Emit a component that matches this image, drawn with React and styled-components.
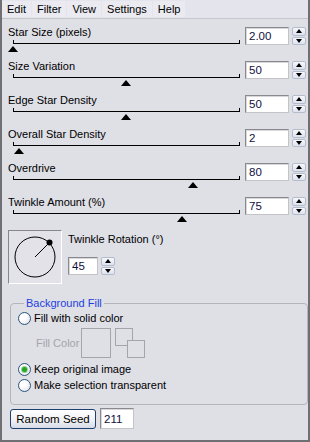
import React from "react";
import styled, { createGlobalStyle } from "styled-components";

const GlobalStyle = createGlobalStyle`
  html, body {
    margin: 0;
    padding: 0;
    background: #dfdfe6;
  }
  * {
    box-sizing: border-box;
  }
`;

const sliders = [
  { label: "Star Size (pixels)", value: "2.00", pct: 0 },
  { label: "Size Variation", value: "50", pct: 0.5 },
  { label: "Edge Star Density", value: "50", pct: 0.5 },
  { label: "Overall Star Density", value: "2", pct: 0.027 },
  { label: "Overdrive", value: "80", pct: 0.8 },
  { label: "Twinkle Amount (%)", value: "75", pct: 0.75 },
];

const Window = styled.div`
  width: 310px;
  height: 442px;
  background: #dfdfe6;
  border-left: 2px solid #6f6f74;
  border-right: 2px solid #6f6f74;
  border-bottom: 2px solid #6f6f74;
  font-family: "Liberation Sans", Arial, sans-serif;
  font-size: 11px;
  color: #000;
  display: flex;
  flex-direction: column;
`;

const MenuBar = styled.div`
  height: 19px;
  display: flex;
  align-items: center;
  gap: 1px;
  background: #e4e4ec;
  border-bottom: 1px solid #c6c6ce;
`;

const MenuItem = styled.span`
  padding: 0 5px;
  line-height: 16px;
  background: #eaeaf0;
`;

const Body = styled.div`
  padding: 6px 0 0 6px;
  display: flex;
  flex-direction: column;
`;

const Row = styled.div`
  display: flex;
  height: 34px;
`;

const LeftCol = styled.div`
  width: 232px;
  display: flex;
  flex-direction: column;
`;

const Label = styled.div`
  line-height: 14px;
  white-space: nowrap;
`;

const SliderArea = styled.div`
  position: relative;
  margin-left: 5px;
  margin-top: 1px;
  width: 227px;
  height: 12px;
`;

const Track = styled.div`
  height: 4px;
  border-left: 1px solid #000;
  border-right: 1px solid #000;
  border-bottom: 1px solid #000;
`;

const Thumb = styled.div`
  position: absolute;
  top: 6px;
  width: 0;
  height: 0;
  border-left: 5.5px solid transparent;
  border-right: 5.5px solid transparent;
  border-bottom: 6px solid #000;
`;

const NumBox = styled.div`
  width: ${(p) => p.$w}px;
  height: ${(p) => p.$h || 18}px;
  margin-top: ${(p) => p.$top || 0}px;
  margin-left: ${(p) => p.$left || 0}px;
  background: #fff;
  border: 1px solid;
  border-color: #8a8a8e #c4c4c8 #c4c4c8 #8a8a8e;
  box-shadow: inset 1px 1px 0 #d8d8dc;
  padding: ${(p) => (p.$h ? 3 : 1)}px 0 0 3px;
  font-size: 11.5px;
  line-height: 15px;
  color: #101040;
`;

const Spin = styled.div`
  width: 14px;
  height: 18px;
  margin-top: ${(p) => p.$top || 0}px;
  margin-left: 3px;
  display: flex;
  flex-direction: column;
  gap: 1px;
`;

const SpinBtn = styled.div`
  flex: 1;
  border: 1px solid #b4bccc;
  border-radius: 2px;
  background: linear-gradient(#f6f8fc, #dde2ee);
  display: flex;
  align-items: center;
  justify-content: center;
`;

const Arrow = styled.div`
  width: 0;
  height: 0;
  border-left: 3.5px solid transparent;
  border-right: 3.5px solid transparent;
  ${(p) =>
    p.$up ? "border-bottom: 4px solid #000;" : "border-top: 4px solid #000;"}
`;

const RotationRow = styled.div`
  display: flex;
  margin-top: 1px;
  gap: 6px;
`;

const Dial = styled.div`
  width: 54px;
  height: 54px;
  border: 1px solid;
  border-color: #86868c #ffffff #ffffff #86868c;
  background: #e2e2e8;
`;

const RotationSide = styled.div`
  display: flex;
  flex-direction: column;
  padding-top: 2px;
`;

const InputLine = styled.div`
  display: flex;
  margin-top: ${(p) => p.$top || 0}px;
`;

const Group = styled.fieldset`
  margin: 13px 0 0 2px;
  width: 298px;
  border: 1px solid #b4b4bc;
  border-radius: 4px;
  padding: 0 0 11px 7px;
  min-width: 0;
`;

const Legend = styled.legend`
  color: #1e3ee0;
  padding: 0 2px;
  margin-left: 6px;
  line-height: 13px;
`;

const RadioRow = styled.div`
  display: flex;
  align-items: center;
  gap: 3px;
  height: 16px;
`;

const Radio = styled.span`
  width: 13px;
  height: 13px;
  border-radius: 50%;
  border: 1px solid #2a5480;
  background: radial-gradient(circle at 35% 35%, #ffffff 30%, #dcdce4 100%);
  display: flex;
  align-items: center;
  justify-content: center;
  &::after {
    content: "";
    width: 5px;
    height: 5px;
    border-radius: 50%;
    background: ${(p) => (p.$checked ? "#2aa52a" : "transparent")};
    box-shadow: ${(p) => (p.$checked ? "0 0 0 1px #8fd48f" : "none")};
  }
`;

const ColorRow = styled.div`
  display: flex;
  align-items: center;
  margin: 2px 0 3px 18px;
`;

const MutedLabel = styled.span`
  color: #a4a4aa;
  width: 45px;
`;

const Swatch = styled.div`
  width: 30px;
  height: 30px;
  border: 1px solid #a4a4aa;
`;

const SwapPair = styled.div`
  position: relative;
  width: 30px;
  height: 30px;
  margin-left: 4px;
`;

const MiniSquare = styled.div`
  position: absolute;
  width: 18px;
  height: 18px;
  border: 1px solid #a4a4aa;
  background: #dfdfe6;
  top: ${(p) => p.$off}px;
  left: ${(p) => p.$off}px;
`;

const BottomRow = styled.div`
  display: flex;
  align-items: center;
  margin: 3px 0 0 2px;
`;

const Button = styled.div`
  width: 86px;
  height: 20px;
  border: 1px solid #1f3f6e;
  border-radius: 3px;
  background: linear-gradient(#ffffff, #f0f0f4 60%, #d6dae6);
  display: flex;
  align-items: center;
  justify-content: center;
  font-size: 11.5px;
`;

function SpinButtons({ top }) {
  return (
    <Spin $top={top}>
      <SpinBtn>
        <Arrow $up />
      </SpinBtn>
      <SpinBtn>
        <Arrow />
      </SpinBtn>
    </Spin>
  );
}

function SliderRow({ label, value, pct }) {
  return (
    <Row>
      <LeftCol>
        <Label>{label}</Label>
        <SliderArea>
          <Track />
          <Thumb style={{ left: pct * 226 - 5.5 }} />
        </SliderArea>
      </LeftCol>
      <NumBox $w={44} $top={2} $left={5}>
        {value}
      </NumBox>
      <SpinButtons top={2} />
    </Row>
  );
}

export default function App() {
  return (
    <Window>
      <GlobalStyle />
      <MenuBar>
        <MenuItem>Edit</MenuItem>
        <MenuItem>Filter</MenuItem>
        <MenuItem>View</MenuItem>
        <MenuItem>Settings</MenuItem>
        <MenuItem>Help</MenuItem>
      </MenuBar>
      <Body>
        {sliders.map((s) => (
          <SliderRow key={s.label} {...s} />
        ))}
        <RotationRow>
          <Dial>
            <svg width="52" height="52" viewBox="0 0 52 52">
              <circle cx="26" cy="26" r="20" fill="none" stroke="#000" strokeWidth="1" />
              <line x1="26" y1="26" x2="40" y2="12" stroke="#000" strokeWidth="1" />
              <circle cx="40.5" cy="11.5" r="3" fill="#000" />
            </svg>
          </Dial>
          <RotationSide>
            <Label>Twinkle Rotation (°)</Label>
            <InputLine $top={11}>
              <NumBox $w={30}>45</NumBox>
              <SpinButtons />
            </InputLine>
          </RotationSide>
        </RotationRow>
        <Group>
          <Legend>Background Fill</Legend>
          <RadioRow>
            <Radio />
            <span>Fill with solid color</span>
          </RadioRow>
          <ColorRow>
            <MutedLabel>Fill Color</MutedLabel>
            <Swatch />
            <SwapPair>
              <MiniSquare $off={0} />
              <MiniSquare $off={12} />
            </SwapPair>
          </ColorRow>
          <RadioRow>
            <Radio $checked />
            <span>Keep original image</span>
          </RadioRow>
          <RadioRow>
            <Radio />
            <span>Make selection transparent</span>
          </RadioRow>
        </Group>
        <BottomRow>
          <Button>Random Seed</Button>
          <NumBox $w={34} $h={21} $left={4}>
            211
          </NumBox>
        </BottomRow>
      </Body>
    </Window>
  );
}
